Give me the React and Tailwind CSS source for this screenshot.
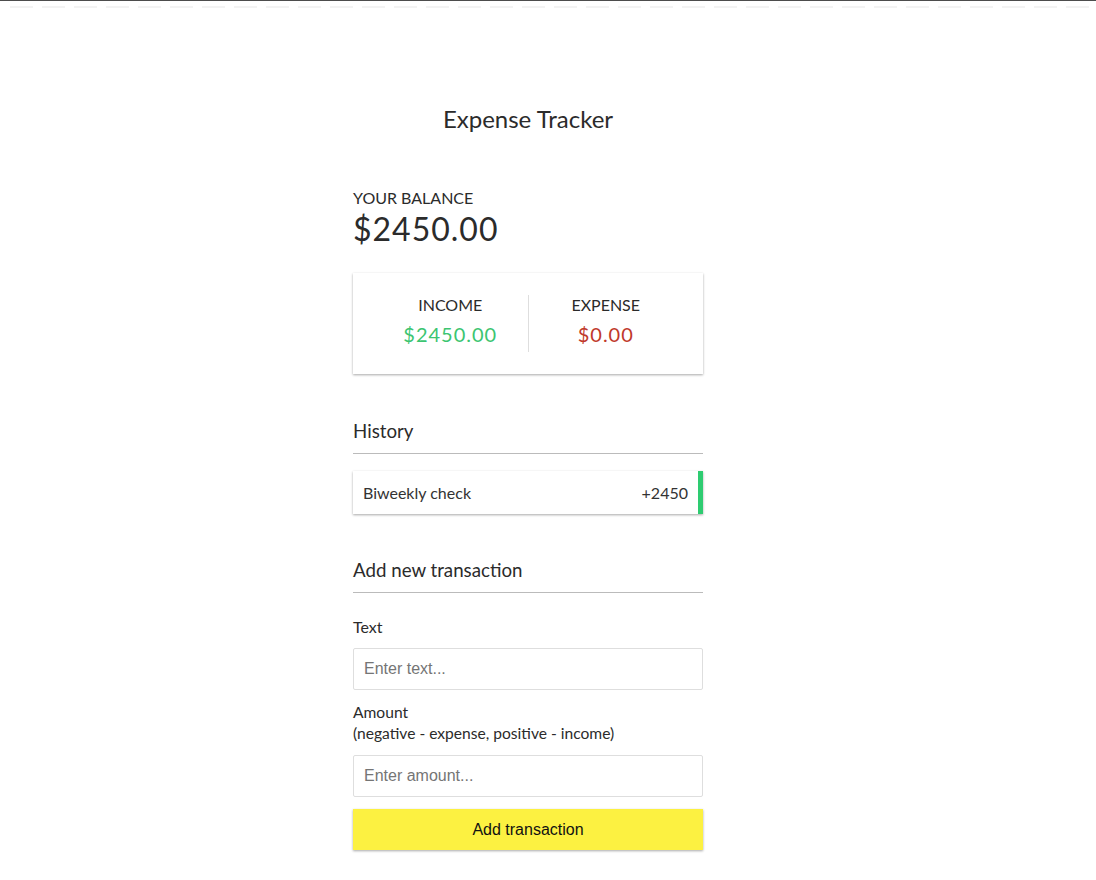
import React from "react";

export default function App() {
  const lato = "font-['Lato','Noto_Sans',sans-serif]";
  const arial = "font-['Liberation_Sans',Arial,sans-serif]";
  return (
    <div className={`min-h-[880px] w-full bg-white ${lato} text-[#2b2b2b]`}>
      <div className="h-px w-full bg-[#4d4d4d]" />
      <svg className="mt-[5px] block h-[2px] w-full" preserveAspectRatio="none">
        <line x1="4" y1="1" x2="1096" y2="1" stroke="#f3f3f3" strokeWidth="2" strokeDasharray="23 9" strokeDashoffset="-6" />
      </svg>
      <div className="ml-[353px] mt-[96px] w-[350px]">
        <h2 className="text-center text-[24px] leading-[29px] font-normal">Expense Tracker</h2>

        <h4 className="mt-[55px] text-[16px] leading-[19px] uppercase font-normal">Your Balance</h4>
        <h1 className="mt-[3px] text-[32px] leading-[38px] tracking-[1px] font-normal">$2450.00</h1>

        <div className="mt-[25px] flex h-[101px] bg-white px-[20px] py-[22px] shadow-[0_1px_3px_rgba(0,0,0,0.12),0_1px_2px_rgba(0,0,0,0.24)]">
          <div className="flex-1 border-r border-[#dedede] text-center">
            <h4 className="text-[16px] leading-[20px] uppercase">Income</h4>
            <p className="mt-[7px] text-[20px] leading-[24px] tracking-[1px] text-[#3cc571]">$2450.00</p>
          </div>
          <div className="flex-1 text-center">
            <h4 className="text-[16px] leading-[20px] uppercase">Expense</h4>
            <p className="mt-[7px] text-[20px] leading-[24px] tracking-[1px] text-[#c0392b]">$0.00</p>
          </div>
        </div>

        <h3 className="mt-[46px] border-b border-[#bbbbbb] pb-[11px] text-[18.72px] leading-[22px] font-normal">History</h3>
        <ul className="mt-[17px]">
          <li className="flex h-[43px] items-center justify-between border-r-[5px] border-[#2ecc71] bg-white px-[10px] text-[16px] text-[#333] shadow-[0_1px_3px_rgba(0,0,0,0.12),0_1px_2px_rgba(0,0,0,0.24)]">
            <span>Biweekly check</span>
            <span>+2450</span>
          </li>
        </ul>

        <h3 className="mt-[45px] border-b border-[#bbbbbb] pb-[11px] text-[18.72px] leading-[22px] font-normal">Add new transaction</h3>

        <div className="mt-[24px] text-[16px] leading-[19px]">Text</div>
        <input
          type="text"
          placeholder="Enter text..."
          className={`mt-[12px] block h-[42px] w-full rounded-[2px] border border-[#dedede] px-[10px] text-[16px] ${arial} placeholder:text-[#757575] outline-none`}
        />

        <div className="mt-[12px] text-[15.6px] leading-[21px]">
          Amount
          <br />
          (negative - expense, positive - income)
        </div>
        <input
          type="number"
          placeholder="Enter amount..."
          className={`mt-[11px] block h-[42px] w-full rounded-[2px] border border-[#dedede] px-[10px] text-[16px] ${arial} placeholder:text-[#757575] outline-none`}
        />

        <button
          className={`mt-[12px] block h-[41px] w-full bg-[#fcf141] text-[16px] text-[#111] ${arial} shadow-[0_1px_3px_rgba(0,0,0,0.12),0_1px_2px_rgba(0,0,0,0.24)]`}
        >
          Add transaction
        </button>
      </div>
    </div>
  );
}
